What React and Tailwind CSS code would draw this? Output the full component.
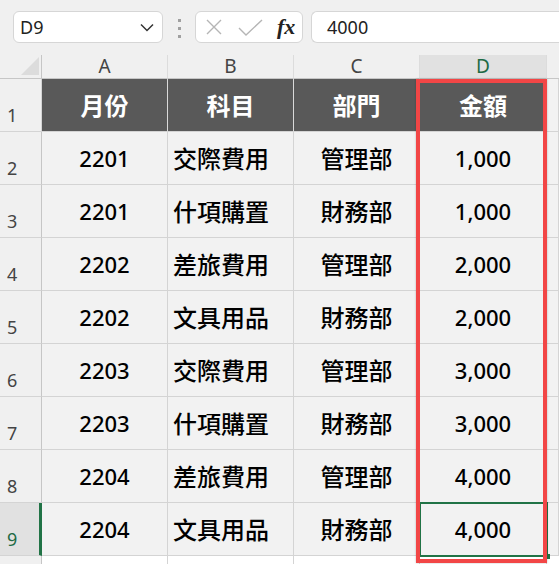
const ROWS = [
  ['2201', '交際費用', '管理部', '1,000'],
  ['2201', '什項購置', '財務部', '1,000'],
  ['2202', '差旅費用', '管理部', '2,000'],
  ['2202', '文具用品', '財務部', '2,000'],
  ['2203', '交際費用', '管理部', '3,000'],
  ['2203', '什項購置', '財務部', '3,000'],
  ['2204', '差旅費用', '管理部', '4,000'],
  ['2204', '文具用品', '財務部', '4,000'],
]

const HEADS = ['月份', '科目', '部門', '金額']
const COLS = ['A', 'B', 'C', 'D']

const cjk = "font-['Noto_Sans_CJK_TC','Noto_Sans',sans-serif]"
const ui = "font-['Noto_Sans','DejaVu_Sans',sans-serif]"

function FormulaBar() {
  return (
    <div className={`flex h-[55px] items-start bg-[#f0f0f0] pl-[13px] pt-[11px] ${ui}`}>
      <div className="flex h-[32px] w-[150px] items-center justify-between rounded-md border border-[#d6d6d6] bg-white pl-[6px] pr-[8px]">
        <span className="text-[18px] text-[#222]">D9</span>
        <svg width="14" height="9" viewBox="0 0 14 9" className="text-[#333]">
          <polyline points="1,1.5 7,7.5 13,1.5" fill="none" stroke="currentColor" strokeWidth="1.5" />
        </svg>
      </div>
      <div className="flex w-[32px] flex-col items-center gap-[5px] pt-[8px]">
        <span className="h-[3px] w-[3px] bg-[#a0a0a0]" />
        <span className="h-[3px] w-[3px] bg-[#a0a0a0]" />
        <span className="h-[3px] w-[3px] bg-[#a0a0a0]" />
      </div>
      <div className="flex h-[32px] w-[108px] items-center rounded-md border border-[#d6d6d6] bg-white pl-[10px]">
        <svg width="16" height="16" viewBox="0 0 16 16">
          <path d="M1 1 L15 15 M15 1 L1 15" stroke="#b5b5b5" strokeWidth="1.4" fill="none" />
        </svg>
        <svg width="25" height="17" viewBox="0 0 25 17" className="ml-[16px]">
          <polyline points="1,9 8,16 24,1" stroke="#b5b5b5" strokeWidth="1.4" fill="none" />
        </svg>
        <span className="ml-[14px] font-['Liberation_Serif',serif] text-[22px] font-bold italic leading-none text-[#222]">
          fx
        </span>
      </div>
      <div className="ml-[8px] flex h-[32px] flex-1 items-center rounded-l-md border border-r-0 border-[#d6d6d6] bg-white pl-[15px]">
        <span className="text-[18px] text-[#222]">4000</span>
      </div>
    </div>
  )
}

function Sheet() {
  const cell = 'border-b border-r border-[#d4d4d4]'
  return (
    <div className="relative">
      <div className="grid grid-cols-[42px_126px_126px_126px_127px_1fr] grid-rows-[24px_repeat(10,53px)]">
        {/* column headers */}
        <div className="flex items-end justify-end border-b border-r border-[#c6c6c6] bg-[#f0f0f0] pb-[3px] pr-[2px]">
          <svg width="18" height="18" viewBox="0 0 18 18">
            <polygon points="18,0 18,18 0,18" fill="#dcdcdc" />
          </svg>
        </div>
        {COLS.map((c) => (
          <div
            key={c}
            className={`flex items-center justify-center border-b border-r border-b-[#c6c6c6] border-r-[#dcdcdc] text-[19px] ${ui} ${
              c === 'D' ? 'bg-[#e1e1e1] text-[#1e6b45]' : 'bg-[#f0f0f0] text-[#444]'
            }`}
          >
            {c}
          </div>
        ))}
        <div className="border-b border-[#c6c6c6] bg-[#f0f0f0]" />

        {/* header row */}
        <div className={`flex items-end pb-[2px] pl-[7px] text-[18px] text-[#444] ${ui} border-b border-r border-[#d4d4d4] bg-[#f0f0f0]`}>
          1
        </div>
        {HEADS.map((h) => (
          <div
            key={h}
            className={`flex items-center justify-center border-b border-r border-b-[#d4d4d4] border-r-[#d9d9d9] bg-[#595959] text-[24px] font-bold text-white ${cjk}`}
          >
            {h}
          </div>
        ))}
        <div className={`${cell} bg-[#f2f2f2]`} />

        {/* data rows */}
        {ROWS.map((r, i) => {
          const n = i + 2
          const sel = n === 9
          return [
            <div
              key={`h${n}`}
              className={`flex items-end pb-[2px] pl-[7px] text-[18px] ${ui} border-b border-[#d4d4d4] ${
                sel
                  ? 'border-r-[3px] border-r-[#217346] bg-[#e1e1e1] text-[#1e6b45]'
                  : 'border-r border-r-[#c6c6c6] bg-[#f0f0f0] text-[#444]'
              }`}
            >
              {n}
            </div>,
            <div key={`a${n}`} className={`${cell} flex items-center justify-center bg-[#f2f2f2] text-[22px] font-medium text-black ${ui}`}>
              {r[0]}
            </div>,
            <div key={`b${n}`} className={`${cell} flex items-center bg-[#f2f2f2] pl-[5px] text-[24px] font-medium text-black ${cjk}`}>
              {r[1]}
            </div>,
            <div key={`c${n}`} className={`${cell} flex items-center justify-center bg-[#f2f2f2] text-[24px] font-medium text-black ${cjk}`}>
              {r[2]}
            </div>,
            <div key={`d${n}`} className={`${cell} flex items-center justify-center bg-[#f2f2f2] text-[22px] font-medium text-black ${ui}`}>
              {r[3]}
            </div>,
            <div key={`e${n}`} className={`${cell} bg-[#f2f2f2]`} />,
          ]
        })}

        {/* row 10, mostly below the fold */}
        <div className="border-r border-[#c6c6c6] bg-[#f0f0f0]" />
        <div className="border-r border-[#d4d4d4] bg-white" />
        <div className="border-r border-[#d4d4d4] bg-white" />
        <div className="border-r border-[#d4d4d4] bg-white" />
        <div className="border-r border-[#d4d4d4] bg-white" />
        <div className="bg-white" />
      </div>

      {/* active cell D9 */}
      <div className="absolute left-[419px] top-[447px] h-[55px] w-[129px] border-2 border-[#217346]" />
      <div className="absolute left-[544px] top-[499px] h-[5px] w-[6px] bg-[#217346]" />

      {/* red highlight of column D */}
      <div className="absolute left-[416px] top-[24px] h-[484px] w-[131px] border-4 border-[#f24646] shadow-[0_0_2px_rgba(0,0,0,0.25)]" />
    </div>
  )
}

export default function App() {
  return (
    <div className="h-[564px] w-[559px] overflow-hidden bg-[#f0f0f0]">
      <FormulaBar />
      <Sheet />
    </div>
  )
}
